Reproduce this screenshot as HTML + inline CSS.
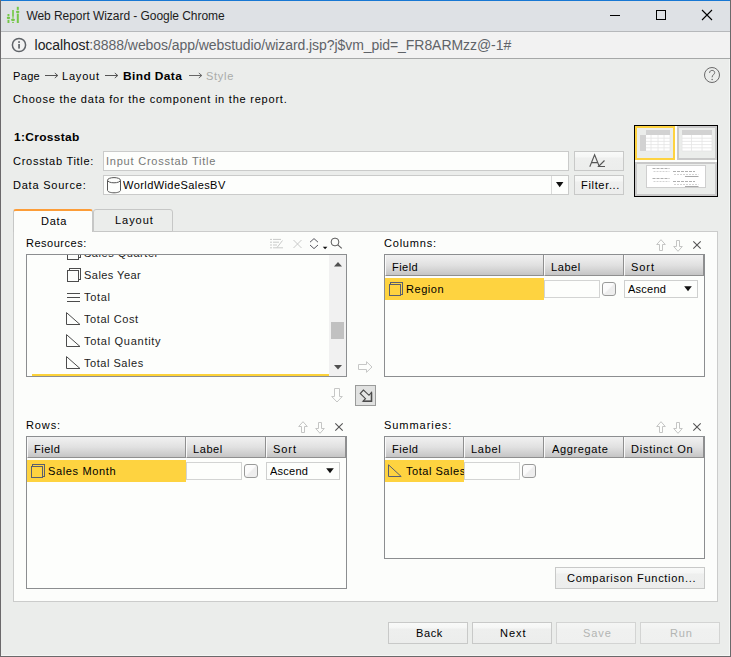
<!DOCTYPE html>
<html>
<head>
<meta charset="utf-8">
<title>Web Report Wizard</title>
<style>
*{box-sizing:border-box;margin:0;padding:0}
html,body{width:731px;height:657px;overflow:hidden}
body{position:relative;background:#ebedeb;font-family:"Liberation Sans",sans-serif;font-size:12px;color:#000}
.a{position:absolute}
svg{position:absolute;overflow:visible}
.t{position:absolute;white-space:nowrap;line-height:14px;height:14px;font-size:11.5px;color:#000;transform-origin:0 0}
.b{font-weight:bold}
.inp{position:absolute;background:#fdfefc;border:1px solid #cacbca}
.btn{position:absolute;border:1px solid #c8c9c8;background:linear-gradient(#f9faf9 0,#f5f6f5 5px,#eeefee 6px,#ecedec 100%)}
.box{position:absolute;background:#fdfefc;border:1px solid #8c8e90}
.hd{position:absolute;height:21px;background:linear-gradient(#f1f1f1 0%,#e1e1e1 50%,#c5c5c5 100%);border-left:1px solid #fafafa;border-right:1px solid #8f8f8f;border-bottom:1px solid #8f8f8f}
.sel{position:absolute;background:#fdfefc;border:1px solid #cfd0cf}
.yl{position:absolute;background:#fed340;height:22px}
.chk{position:absolute;width:14px;height:14px;border:1px solid #9a9b9a;border-radius:3px;background:linear-gradient(135deg,#fdfdfd 0%,#fbfbfb 45%,#ededed 55%,#efefef 100%)}
</style>
</head>
<body>
<!-- window chrome -->
<div class="a" style="left:0;top:1px;width:731px;height:30px;background:#dee1e5"></div>
<div class="a" style="left:0;top:31px;width:731px;height:1px;background:#b6b8bb"></div>
<div class="a" style="left:0;top:32px;width:731px;height:26px;background:#f2f2f2"></div>
<div class="a" style="left:0;top:58px;width:731px;height:1px;background:#a6a8a8"></div>
<div class="a" style="left:729px;top:59px;width:1px;height:597px;background:#f4f6f4"></div>
<div class="a" style="left:1px;top:655px;width:729px;height:1px;background:#f4f6f4"></div>
<div class="a" style="left:0;top:0;width:731px;height:1px;background:#1777d3"></div>
<div class="a" style="left:0;top:0;width:1px;height:657px;background:#6b696b"></div>
<div class="a" style="left:730px;top:0;width:1px;height:657px;background:#6b696b"></div>
<div class="a" style="left:0;top:656px;width:731px;height:1px;background:#6b696b"></div>

<!-- app icon -->
<svg style="left:0;top:0" width="24" height="24">
 <g fill="#74c648">
  <rect x="7.5" y="14" width="1.9" height="2.2"/><rect x="6.8" y="16.7" width="3.3" height="2.3" rx="1.1"/><rect x="7.5" y="19.8" width="1.9" height="3.2"/>
  <rect x="12" y="10" width="2" height="6.8" fill="#86cd60"/><rect x="12" y="16.8" width="2" height="1.8" fill="#a6d98a"/><rect x="11.1" y="18.7" width="3.8" height="2.3" rx="1.1"/><rect x="12" y="21.9" width="2" height="1.1" fill="#86cd60"/>
  <rect x="16.8" y="6.8" width="2" height="3.1"/><rect x="16" y="10.8" width="3.4" height="2.3" rx="1.1"/><rect x="16.8" y="13.6" width="2" height="9.4"/>
 </g>
</svg>
<!-- window controls -->
<div class="a" style="left:610px;top:15px;width:10px;height:1px;background:#000"></div>
<div class="a" style="left:656px;top:10px;width:10px;height:10px;border:1px solid #000"></div>
<svg style="left:702px;top:10px" width="10" height="10"><path d="M0 0L10 10M10 0L0 10" stroke="#000" stroke-width="1.1" fill="none"/></svg>
<!-- info icon -->
<svg style="left:11px;top:37px" width="16" height="16"><circle cx="8" cy="8" r="6.6" fill="none" stroke="#5f6368" stroke-width="1.5"/><rect x="7.2" y="7" width="1.7" height="4.6" fill="#5f6368"/><rect x="7.2" y="4.2" width="1.7" height="1.7" fill="#5f6368"/></svg>

<!-- breadcrumb arrows -->
<svg style="left:45px;top:71px" width="14" height="10"><path d="M0 4.5H12.8M9.8 2L12.8 4.5L9.8 7" stroke="#555" stroke-width="1" fill="none"/></svg>
<svg style="left:105px;top:71px" width="14" height="10"><path d="M0 4.5H12.8M9.8 2L12.8 4.5L9.8 7" stroke="#555" stroke-width="1" fill="none"/></svg>
<svg style="left:189px;top:71px" width="14" height="10"><path d="M0 4.5H12.8M9.8 2L12.8 4.5L9.8 7" stroke="#666" stroke-width="1" fill="none"/></svg>
<!-- help icon -->
<svg style="left:704px;top:67px" width="16" height="16"><circle cx="8" cy="8" r="7.5" fill="none" stroke="#6a6a6a" stroke-width="1"/><path d="M5.6 5.9C5.6 4.1 6.8 3.4 8.1 3.4C9.6 3.4 10.7 4.3 10.7 5.6C10.7 7.6 8.1 7.8 8.1 10.3" fill="none" stroke="#6a6a6a" stroke-width="1"/><circle cx="8.1" cy="12.5" r="0.75" fill="#6a6a6a"/></svg>

<!-- form -->
<div class="inp" style="left:103px;top:151px;width:466px;height:20px"></div>
<div class="inp" style="left:103px;top:175px;width:466px;height:20px"></div>
<div class="a" style="left:551px;top:176px;width:1px;height:18px;background:#d9dad9"></div>
<svg style="left:556px;top:182px" width="8" height="6"><path d="M0 0H7.4L3.7 5.2Z" fill="#111"/></svg>
<!-- db icon -->
<svg style="left:107px;top:177px" width="15" height="17"><path d="M0.5 3.2V13.3C0.5 14.8 3.6 15.8 7 15.8S13.5 14.8 13.5 13.3V3.2" fill="#fdfefc" stroke="#555" stroke-width="1"/><ellipse cx="7" cy="3.2" rx="6.5" ry="2.6" fill="#fdfefc" stroke="#555" stroke-width="1"/></svg>
<div class="btn" style="left:574px;top:151px;width:50px;height:20px"></div>
<div class="btn" style="left:574px;top:175px;width:50px;height:20px"></div>
<!-- A font icon -->
<svg style="left:589px;top:154px" width="18" height="14"><path d="M0.8 12.8L5.6 0.8L10.4 12.8M2.6 8.6H8.6" stroke="#555" stroke-width="1.1" fill="none"/><path d="M15.5 6.5L9.5 12.5H16" stroke="#555" stroke-width="1.1" fill="none"/></svg>

<!-- layout thumbnail -->
<div class="a" style="left:634px;top:125px;width:84px;height:72px;border:1px solid #000;background:#fdfefc"></div>
<div class="a" style="left:635px;top:126px;width:40px;height:34px;border:2px solid #fed340;background:#ebedeb"></div>
<div class="a" style="left:677px;top:126px;width:40px;height:34px;border:2px solid #c9c9c9;background:#ebedeb"></div>
<div class="a" style="left:635px;top:162px;width:82px;height:34px;border:2px solid #c9c9c9;background:#ebedeb"></div>
<svg style="left:634px;top:125px" width="84" height="72">
 <!-- crosstab thumb -->
 <rect x="12" y="5" width="24" height="5" fill="#d2d2d2"/><rect x="6" y="10" width="6" height="16" fill="#d2d2d2"/>
 <rect x="12" y="10" width="24" height="16" fill="#fff"/>
 <path d="M12 13.2H36M12 16.4H36M12 19.6H36M12 22.8H36M17 10V26M24 10V26M30 10V26M36 10V26M12 26H36" stroke="#e4e4e4" stroke-width="0.8" fill="none"/>
 <!-- table thumb -->
 <rect x="48" y="5" width="30" height="5" fill="#d2d2d2"/><rect x="48" y="10" width="30" height="16" fill="#fff"/>
 <path d="M48 13.2H78M48 16.4H78M48 19.6H78M48 22.8H78M57.5 10V26M68 10V26M48 10V26M78 10V26M48 26H78" stroke="#e4e4e4" stroke-width="0.8" fill="none"/>
 <!-- banded thumb -->
 <rect x="12.5" y="40.5" width="59" height="22" fill="#fff" stroke="#cfcfcf" stroke-width="1"/>
 <g stroke="#b0b0b0" stroke-width="1" stroke-dasharray="3 1">
  <path d="M18.5 43.5H35.5M39 46.5H61M18.5 53.5H35.5M39 56.5H61"/>
 </g>
 <g stroke="#d2d2d2" stroke-width="1" stroke-dasharray="2 1">
  <path d="M19.5 46.5H35.5M40 49.5H64.5M19.5 56.5H35.5M40 59.5H64.5"/>
 </g>
 <g stroke="#a8a8a8" stroke-width="1"><path d="M51 51.5H64.5M51 61.5H64.5"/></g>
</svg>

<!-- tabs + panel -->
<div class="a" style="left:13px;top:231px;width:705px;height:371px;border:1px solid #cbcccb;background:#fcfdfb"></div>
<div class="a" style="left:93px;top:209px;width:80px;height:23px;border:1px solid #c6c7c6;border-radius:3px 3px 0 0;background:#ebedeb"></div>
<div class="a" style="left:13px;top:209px;width:80px;height:23px;border:1px solid #c6c7c6;border-bottom:none;border-top:2px solid #fc9d38;border-radius:3px 3px 0 0;background:#fcfdfb"></div>

<!-- resources toolbar icons -->
<svg style="left:270px;top:238px" width="76" height="12">
 <g stroke="#c9cac9" stroke-width="1" fill="none">
  <path d="M0 1.4H2M3 1.4H11M0 4.2H2M3 4.2H9M0 7H2M3 7H7M0 9.8H2M3 9.8H13M12.5 2.5L7 9.6"/>
  <path d="M23.5 2L31.5 10M31.5 2L23.5 10"/>
 </g>
 <path d="M40 4.2L44 0.6L48 4.2M40 7L44 10.6L48 7" stroke="#585860" stroke-width="1" fill="none"/>
 <path d="M52.8 8.8H57.4L55.1 11.2Z" fill="#111"/>
 <circle cx="65" cy="4" r="3.9" fill="none" stroke="#5a5a5a" stroke-width="1"/><path d="M67.8 6.8L71.8 10.4" stroke="#5a5a5a" stroke-width="1.1"/>
</svg>

<!-- resources list -->
<div class="box" style="left:26px;top:254px;width:321px;height:123px"></div>
<div class="a" style="left:329px;top:255px;width:17px;height:121px;background:#f1f1f1"></div>
<div class="a" style="left:331px;top:322px;width:13px;height:17px;background:#c1c1c1"></div>
<svg style="left:333.5px;top:262px" width="9" height="5"><path d="M0 4.4H8L4 0Z" fill="#505050"/></svg>
<svg style="left:333.5px;top:365px" width="9" height="5"><path d="M0 0H8L4 4.4Z" fill="#505050"/></svg>
<div class="a" style="left:32px;top:374px;width:297px;height:2px;background:#fcd23a"></div>
<!-- cut off "Sales Quarter" row -->
<div class="a" style="left:27px;top:255px;width:300px;height:6px;overflow:hidden">
 <svg style="left:40px;top:-9px" width="15" height="15"><rect x="2.5" y="0.5" width="11" height="11" fill="none" stroke="#4c4c4c"/><rect x="0.5" y="2.5" width="11" height="11" fill="#fdfefc" stroke="#4c4c4c"/></svg>
</div>
<!-- tree icons -->
<svg style="left:67px;top:268px" width="15" height="15"><rect x="2.5" y="0.5" width="11" height="11" fill="none" stroke="#4c4c4c"/><rect x="0.5" y="2.5" width="11" height="11" fill="#fdfefc" stroke="#4c4c4c"/></svg>
<svg style="left:67px;top:292px" width="14" height="10"><path d="M0 1.5H13M0 5.5H13M0 9.5H13" stroke="#4c4c4c" stroke-width="1"/></svg>
<svg style="left:66px;top:313px" width="15" height="12"><path d="M0.5 -0.4V11.5H14Z" fill="none" stroke="#4c4c4c" stroke-width="1"/></svg>
<svg style="left:66px;top:335px" width="15" height="12"><path d="M0.5 -0.4V11.5H14Z" fill="none" stroke="#4c4c4c" stroke-width="1"/></svg>
<svg style="left:66px;top:357px" width="15" height="12"><path d="M0.5 -0.4V11.5H14Z" fill="none" stroke="#4c4c4c" stroke-width="1"/></svg>

<!-- middle arrows -->
<svg style="left:358px;top:361px" width="15" height="13"><path d="M0.5 3.5H8.5V0.7L14 6L8.5 11.3V8.5H0.5Z" fill="#fdfefc" stroke="#c6c7c6" stroke-width="1"/></svg>
<svg style="left:331px;top:388px" width="13" height="15"><path d="M3.5 0.5V8.5H0.7L6 14L11.3 8.5H8.5V0.5Z" fill="#fdfefc" stroke="#c6c7c6" stroke-width="1"/></svg>
<div class="a" style="left:355px;top:385px;width:21px;height:21px;border:1px solid #9a9b9a;background:#e1e2e1"></div>
<svg style="left:355px;top:385px" width="21" height="21"><path d="M8.5 5L5.2 8.5L10.5 13.7L8 16.2H16.5V7.5L14 10.3Z" fill="#e6e7e6" stroke="#4a4a4a" stroke-width="1.1" stroke-linejoin="miter"/><path d="M8 16.2H16.5V7.5" fill="none" stroke="#4c4c4c" stroke-width="1.5"/></svg>

<!-- columns -->
<svg style="left:656px;top:240px" width="46" height="11">
 <path d="M3.5 10.5V4.5H0.7L5 -0.3L9.3 4.5H6.5V10.5Z" fill="#fdfefc" stroke="#c4c5c4"/>
 <path d="M20.5 0.5V6.5H17.7L22 11.3L26.3 6.5H23.5V0.5Z" fill="#fdfefc" stroke="#c4c5c4"/>
 <path d="M37.3 1.3L44.7 8.7M44.7 1.3L37.3 8.7" stroke="#555" stroke-width="1.1"/>
</svg>
<div class="box" style="left:384px;top:254px;width:321px;height:123px"></div>
<div class="hd" style="left:385px;top:255px;width:159px"></div>
<div class="hd" style="left:544px;top:255px;width:80px"></div>
<div class="hd" style="left:624px;top:255px;width:80px"></div>
<div class="yl" style="left:385px;top:278px;width:159px"></div>
<svg style="left:389px;top:282px" width="15" height="15"><rect x="1.5" y="0.5" width="12" height="12" fill="none" stroke="#5a5f6e"/><rect x="0.5" y="2.5" width="11" height="11" fill="#fed340" stroke="#5a5f6e"/></svg>
<div class="inp" style="left:544px;top:280px;width:56px;height:18px;border-color:#d3d4d3"></div>
<div class="chk" style="left:602px;top:282px"></div>
<div class="sel" style="left:624px;top:280px;width:74px;height:18px"></div>
<svg style="left:684px;top:286px" width="9" height="6"><path d="M0.2 0.3H7.8L4 5.3Z" fill="#111"/></svg>

<!-- rows -->
<svg style="left:298px;top:422px" width="46" height="11">
 <path d="M3.5 10.5V4.5H0.7L5 -0.3L9.3 4.5H6.5V10.5Z" fill="#fdfefc" stroke="#c4c5c4"/>
 <path d="M20.5 0.5V6.5H17.7L22 11.3L26.3 6.5H23.5V0.5Z" fill="#fdfefc" stroke="#c4c5c4"/>
 <path d="M37.3 1.3L44.7 8.7M44.7 1.3L37.3 8.7" stroke="#555" stroke-width="1.1"/>
</svg>
<div class="box" style="left:26px;top:436px;width:321px;height:153px"></div>
<div class="hd" style="left:27px;top:437px;width:159px"></div>
<div class="hd" style="left:186px;top:437px;width:80px"></div>
<div class="hd" style="left:266px;top:437px;width:80px"></div>
<div class="yl" style="left:27px;top:460px;width:159px"></div>
<svg style="left:31px;top:464px" width="15" height="15"><rect x="1.5" y="0.5" width="12" height="12" fill="none" stroke="#5a5f6e"/><rect x="0.5" y="2.5" width="11" height="11" fill="#fed340" stroke="#5a5f6e"/></svg>
<div class="inp" style="left:186px;top:462px;width:56px;height:18px;border-color:#d3d4d3"></div>
<div class="chk" style="left:244px;top:464px"></div>
<div class="sel" style="left:266px;top:462px;width:74px;height:18px"></div>
<svg style="left:326px;top:468px" width="9" height="6"><path d="M0.2 0.3H7.8L4 5.3Z" fill="#111"/></svg>

<!-- summaries -->
<svg style="left:656px;top:422px" width="46" height="11">
 <path d="M3.5 10.5V4.5H0.7L5 -0.3L9.3 4.5H6.5V10.5Z" fill="#fdfefc" stroke="#c4c5c4"/>
 <path d="M20.5 0.5V6.5H17.7L22 11.3L26.3 6.5H23.5V0.5Z" fill="#fdfefc" stroke="#c4c5c4"/>
 <path d="M37.3 1.3L44.7 8.7M44.7 1.3L37.3 8.7" stroke="#555" stroke-width="1.1"/>
</svg>
<div class="box" style="left:384px;top:436px;width:321px;height:123px"></div>
<div class="hd" style="left:385px;top:437px;width:79px"></div>
<div class="hd" style="left:464px;top:437px;width:80px"></div>
<div class="hd" style="left:544px;top:437px;width:80px"></div>
<div class="hd" style="left:624px;top:437px;width:80px"></div>
<div class="yl" style="left:385px;top:460px;width:79px"></div>
<svg style="left:388px;top:464px" width="15" height="13"><path d="M0.5 0.8V12.5H13.2Z" fill="none" stroke="#5a5f6e" stroke-width="1"/></svg>
<div class="inp" style="left:464px;top:462px;width:56px;height:18px;border-color:#d3d4d3;z-index:2"></div>
<div class="chk" style="left:522px;top:464px"></div>

<div class="btn" style="left:555px;top:567px;width:150px;height:22px"></div>

<!-- bottom buttons -->
<div class="btn" style="left:388px;top:622px;width:80px;height:22px"></div>
<div class="btn" style="left:472px;top:622px;width:80px;height:22px"></div>
<div class="btn" style="left:556px;top:622px;width:80px;height:22px;border-color:#d3d4d3;background:linear-gradient(#f4f5f4 0,#f2f3f2 5px,#f0f1f0 6px,#eff0ef 100%)"></div>
<div class="btn" style="left:640px;top:622px;width:80px;height:22px;border-color:#d3d4d3;background:linear-gradient(#f4f5f4 0,#f2f3f2 5px,#f0f1f0 6px,#eff0ef 100%)"></div>

<span class="t " style="left:26.39px;top:9px;transform:scaleX(1.0000);letter-spacing:-0.050px;font-size:12px;color:#1c1c1c">Web Report Wizard - Google Chrome</span>
<span class="t " style="left:34.58px;top:37px;transform:scaleX(1.0000);letter-spacing:-0.062px;font-size:14px;line-height:16px;height:16px;color:#5f6368"><span style="color:#202124">localhost</span>:8888/webos/app/webstudio/wizard.jsp?j$vm_pid=_FR8ARMzz@-1#</span>
<span class="t " style="left:12.92px;top:69px;transform:scaleX(0.9600);letter-spacing:0.340px;">Page</span>
<span class="t " style="left:61.50px;top:69px;transform:scaleX(0.9600);letter-spacing:0.827px;">Layout</span>
<span class="t b" style="left:122.72px;top:69px;transform:scaleX(1.0400);letter-spacing:0.358px;">Bind Data</span>
<span class="t " style="left:205.56px;top:69px;transform:scaleX(0.9600);letter-spacing:0.735px;color:#a9aba9">Style</span>
<span class="t " style="left:12.68px;top:92px;transform:scaleX(0.9600);letter-spacing:0.789px;">Choose the data for the component in the report.</span>
<span class="t b" style="left:13.56px;top:130px;transform:scaleX(1.0400);letter-spacing:0.290px;">1:Crosstab</span>
<span class="t " style="left:12.93px;top:154px;transform:scaleX(0.9600);letter-spacing:0.734px;">Crosstab Title:</span>
<span class="t " style="left:12.50px;top:178px;transform:scaleX(0.9600);letter-spacing:0.785px;">Data Source:</span>
<span class="t " style="left:105.50px;top:154px;transform:scaleX(0.9600);letter-spacing:0.787px;color:#777977">Input Crosstab Title</span>
<span class="t " style="left:122.56px;top:178px;transform:scaleX(0.9600);letter-spacing:0.426px;">WorldWideSalesBV</span>
<span class="t " style="left:580.92px;top:178px;transform:scaleX(0.9600);letter-spacing:0.689px;">Filter...</span>
<span class="t " style="left:40.75px;top:214px;transform:scaleX(0.9600);letter-spacing:0.713px;">Data</span>
<span class="t " style="left:114.75px;top:213px;transform:scaleX(0.9600);letter-spacing:0.964px;">Layout</span>
<span class="t " style="left:25.92px;top:236px;transform:scaleX(0.9600);letter-spacing:0.509px;">Resources:</span>
<span class="t " style="left:83.81px;top:246px;transform:scaleX(0.9600);letter-spacing:0.529px;color:#222;clip-path:inset(9px 0 0 0)">Sales Quarter</span>
<span class="t " style="left:405.83px;top:464px;transform:scaleX(0.9600);letter-spacing:0.539px;">Total Sales</span>
<span class="t " style="left:83.81px;top:268px;transform:scaleX(0.9600);letter-spacing:0.457px;color:#222">Sales Year</span>
<span class="t " style="left:83.58px;top:290px;transform:scaleX(0.9600);letter-spacing:0.699px;color:#222">Total</span>
<span class="t " style="left:83.58px;top:312px;transform:scaleX(0.9600);letter-spacing:0.582px;color:#222">Total Cost</span>
<span class="t " style="left:83.58px;top:334px;transform:scaleX(0.9600);letter-spacing:0.729px;color:#222">Total Quantity</span>
<span class="t " style="left:83.58px;top:356px;transform:scaleX(0.9600);letter-spacing:0.539px;color:#222">Total Sales</span>
<span class="t " style="left:383.93px;top:236px;transform:scaleX(0.9600);letter-spacing:0.798px;">Columns:</span>
<span class="t " style="left:391.67px;top:260px;transform:scaleX(0.9600);letter-spacing:0.464px;">Field</span>
<span class="t " style="left:550.75px;top:260px;transform:scaleX(0.9600);letter-spacing:0.589px;">Label</span>
<span class="t " style="left:630.56px;top:260px;transform:scaleX(0.9600);letter-spacing:0.940px;">Sort</span>
<span class="t " style="left:405.92px;top:282px;transform:scaleX(0.9600);letter-spacing:0.546px;">Region</span>
<span class="t " style="left:627.59px;top:282px;transform:scaleX(0.9600);letter-spacing:0.231px;">Ascend</span>
<span class="t " style="left:25.92px;top:418px;transform:scaleX(0.9600);letter-spacing:0.890px;">Rows:</span>
<span class="t " style="left:33.92px;top:442px;transform:scaleX(0.9600);letter-spacing:0.529px;">Field</span>
<span class="t " style="left:192.75px;top:442px;transform:scaleX(0.9600);letter-spacing:0.589px;">Label</span>
<span class="t " style="left:272.56px;top:442px;transform:scaleX(0.9600);letter-spacing:0.954px;">Sort</span>
<span class="t " style="left:47.56px;top:464px;transform:scaleX(0.9600);letter-spacing:0.653px;">Sales Month</span>
<span class="t " style="left:269.59px;top:464px;transform:scaleX(0.9600);letter-spacing:0.231px;">Ascend</span>
<span class="t " style="left:383.81px;top:418px;transform:scaleX(0.9600);letter-spacing:0.966px;">Summaries:</span>
<span class="t " style="left:391.67px;top:442px;transform:scaleX(0.9600);letter-spacing:0.541px;">Field</span>
<span class="t " style="left:470.75px;top:442px;transform:scaleX(0.9600);letter-spacing:0.720px;">Label</span>
<span class="t " style="left:551.84px;top:442px;transform:scaleX(0.9600);letter-spacing:0.648px;">Aggregate</span>
<span class="t " style="left:630.75px;top:442px;transform:scaleX(0.9600);letter-spacing:0.803px;">Distinct On</span>
<span class="t " style="left:566.93px;top:571px;transform:scaleX(0.9600);letter-spacing:0.711px;">Comparison Function...</span>
<span class="t " style="left:415.92px;top:626px;transform:scaleX(0.9600);letter-spacing:0.622px;">Back</span>
<span class="t " style="left:499.75px;top:626px;transform:scaleX(0.9600);letter-spacing:0.962px;">Next</span>
<span class="t " style="left:582.81px;top:626px;transform:scaleX(0.9600);letter-spacing:0.906px;color:#b3b5b3">Save</span>
<span class="t " style="left:669.67px;top:626px;transform:scaleX(0.9600);letter-spacing:0.856px;color:#b3b5b3">Run</span>
</body>
</html>
